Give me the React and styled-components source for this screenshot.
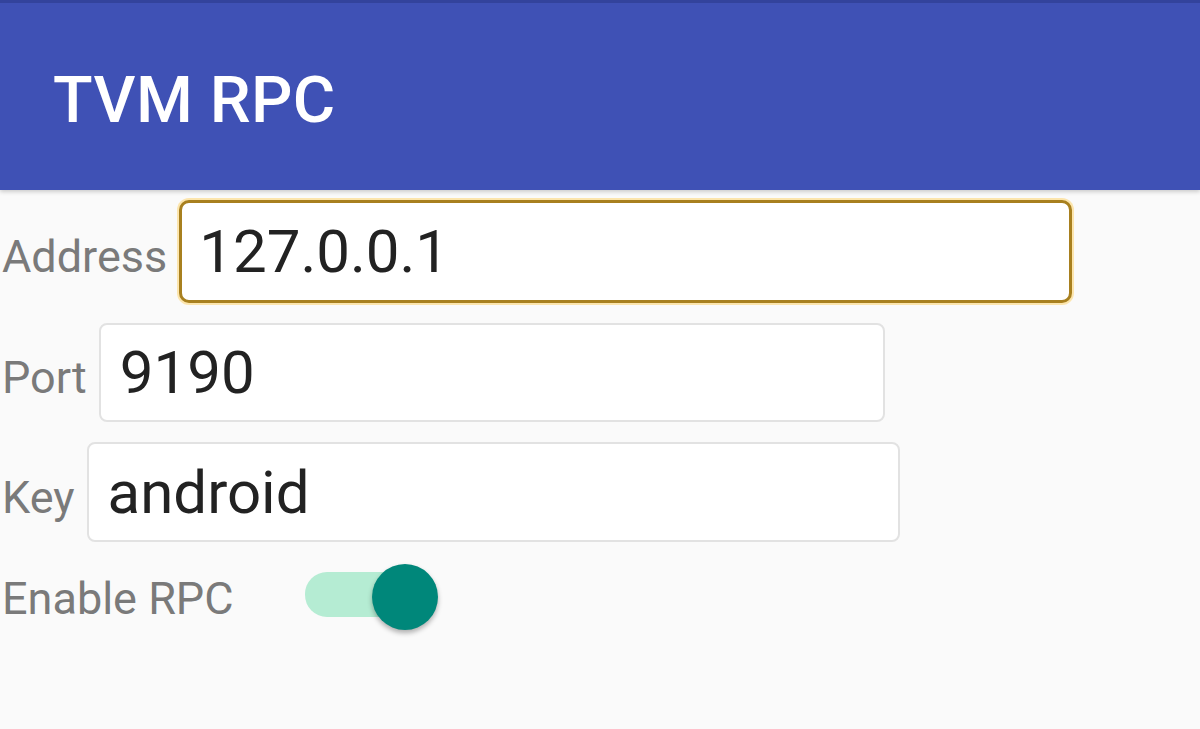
import styled, { createGlobalStyle } from "styled-components";

const Global = createGlobalStyle`
  html, body { margin: 0; padding: 0; }
  body {
    min-height: 100vh;
    background: #fafafa;
    font-family: Roboto, "Noto Sans", "Liberation Sans", sans-serif;
  }
`

const AppBar = styled.header`
  height: 190px;
  box-sizing: border-box;
  border-top: 3px solid #33439c;
  background: #3f51b5;
  display: flex;
  align-items: center;
  padding: 8px 0 0 53px;
  box-shadow: 0 2px 4px rgba(0, 0, 0, 0.18);
  position: relative;
`

const Title = styled.h1`
  margin: 0;
  color: #ffffff;
  font-size: 65px;
  font-weight: 500;
  line-height: 1;
  letter-spacing: 0.4px;
`

const Form = styled.main`
  display: flex;
  flex-direction: column;
  gap: 20px;
  padding: 10px 0 0 2px;
`

/* labels sit on the baseline of the field text, like an Android LinearLayout */
const Row = styled.div`
  display: flex;
  align-items: baseline;
  gap: 12px;
  height: ${p => p.$h}px;
`

const Label = styled.label`
  color: #7a7a7a;
  font-size: 45px;
  line-height: 1;
`

const Field = styled.input`
  box-sizing: border-box;
  width: ${p => p.$w}px;
  height: 100%;
  margin: 0;
  padding: 0 0 0 ${p => (p.$focused ? 17 : 19)}px;
  background: #ffffff;
  border: ${p => (p.$focused ? "3px solid #a8801f" : "2px solid #e2e2e2")};
  border-radius: ${p => (p.$focused ? 10 : 8)}px;
  box-shadow: ${p => (p.$focused ? "0 0 0 2px rgba(255, 204, 80, 0.45)" : "none")};
  font-family: Roboto, "Noto Sans", "Liberation Sans", sans-serif;
  font-size: 60px;
  color: #222222;
  outline: none;
`

const SwitchRow = styled.div`
  display: flex;
  align-items: center;
  height: 67px;
  margin-top: 2px;
`

const SwitchLabel = styled(Label)`
  width: 303px;
  margin-top: 2px;
`

const Switch = styled.div`
  position: relative;
  width: 135px;
  height: 67px;
`

const Track = styled.div`
  position: absolute;
  left: 0;
  top: 8px;
  width: 122px;
  height: 45px;
  border-radius: 22px;
  background: ${p => (p.$on ? "#b5ecd3" : "#bdbdbd")};
`

const Thumb = styled.div`
  position: absolute;
  top: 0;
  left: ${p => (p.$on ? 67 : 0)}px;
  width: 66px;
  height: 66px;
  border-radius: 50%;
  background: ${p => (p.$on ? "#00877a" : "#f1f1f1")};
  box-shadow: 0 3px 5px rgba(0, 0, 0, 0.3);
`

const fields = [
  { label: "Address", value: "127.0.0.1", width: 893, height: 103, focused: true },
  { label: "Port", value: "9190", width: 786, height: 99 },
  { label: "Key", value: "android", width: 813, height: 100 },
];

export default function App() {
  return (
    <>
      <Global />
      <AppBar>
        <Title>TVM RPC</Title>
      </AppBar>
      <Form>
        {fields.map(f => (
          <Row key={f.label} $h={f.height}>
            <Label>{f.label}</Label>
            <Field $w={f.width} $focused={f.focused} defaultValue={f.value} />
          </Row>
        ))}
        <SwitchRow>
          <SwitchLabel>Enable RPC</SwitchLabel>
          <Switch role="switch" aria-checked="true">
            <Track $on />
            <Thumb $on />
          </Switch>
        </SwitchRow>
      </Form>
    </>
  );
}
